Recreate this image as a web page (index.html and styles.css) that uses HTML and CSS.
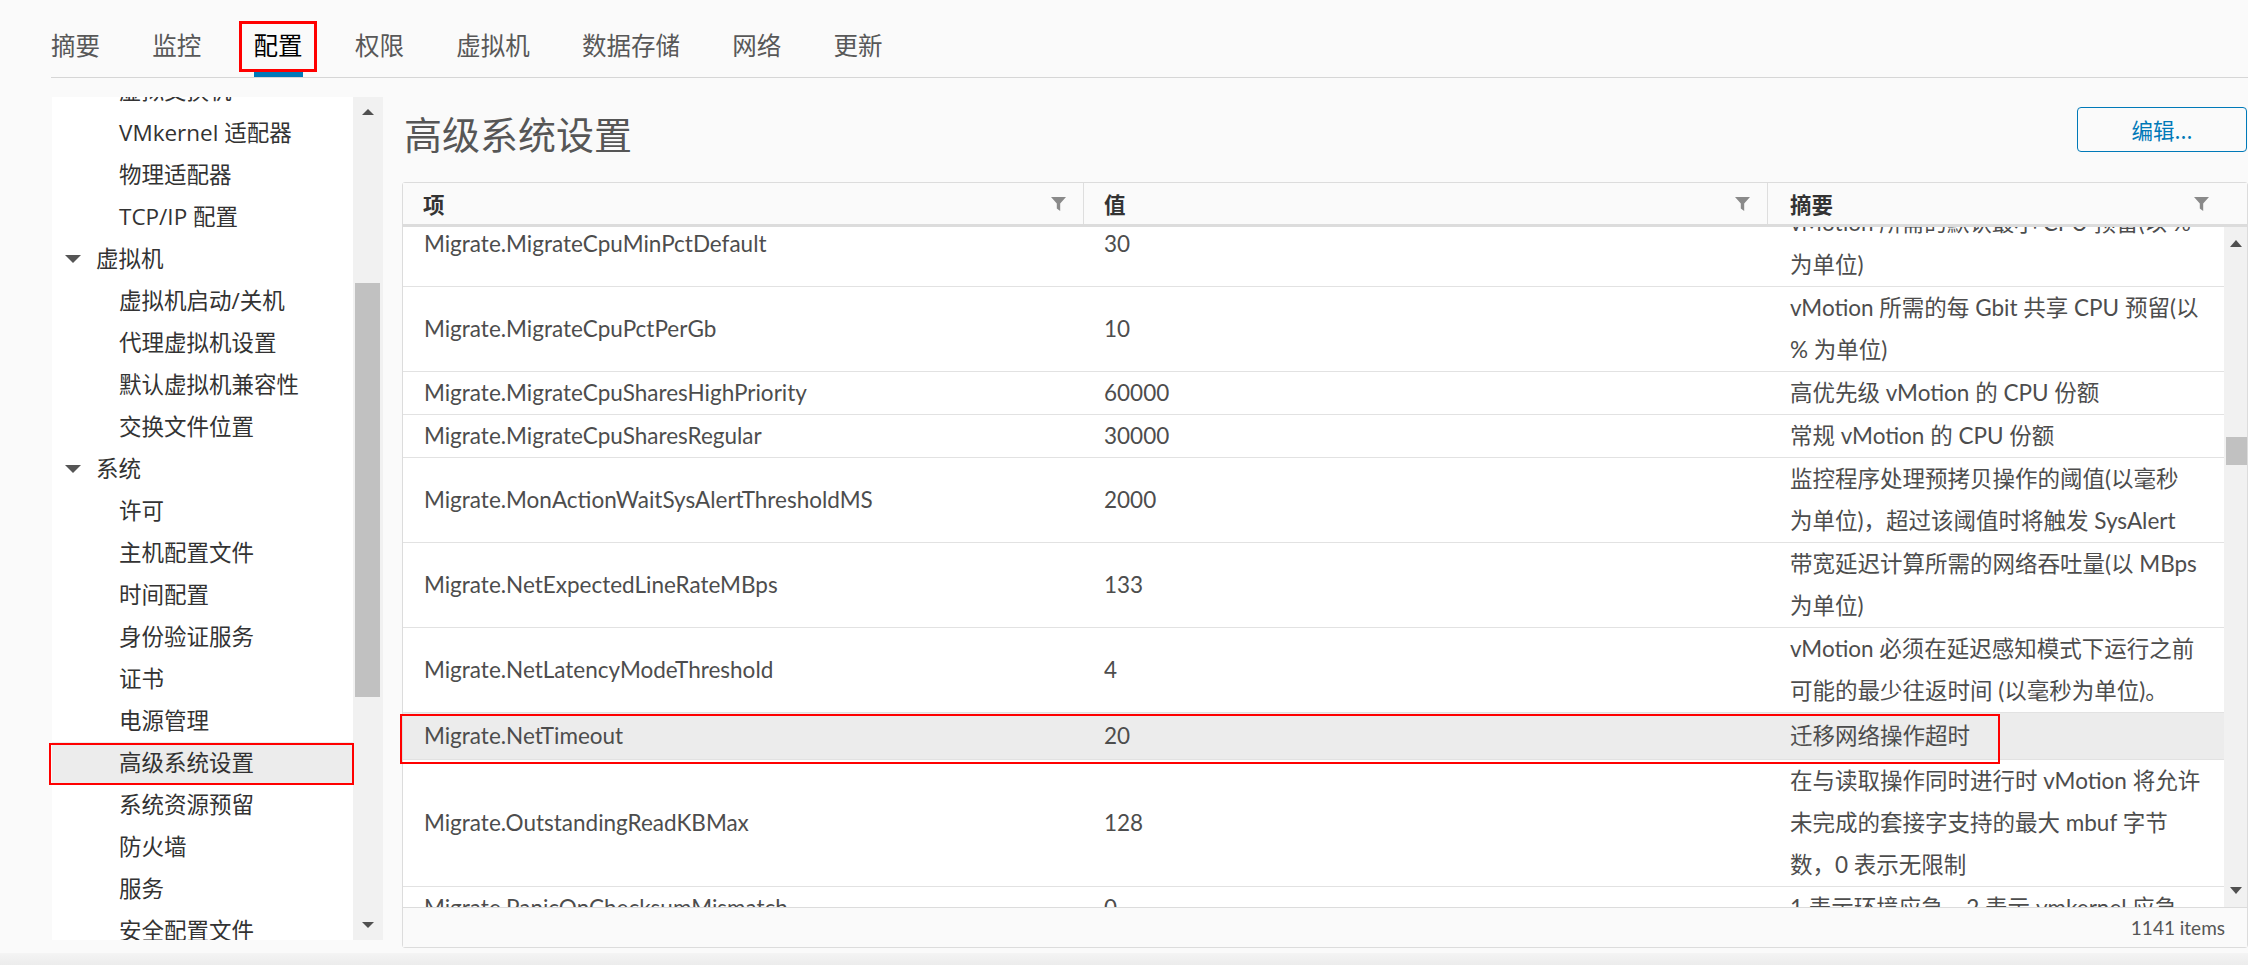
FILE: index.html
```html
<!DOCTYPE html>
<html lang="zh-CN">
<head>
<meta charset="utf-8">
<title>高级系统设置</title>
<link rel="stylesheet" href="styles.css">
</head>
<body>
  <nav class="tabs">
    <div class="tab">摘要</div>
    <div class="tab">监控</div>
    <div class="tab active">配置</div>
    <div class="tab">权限</div>
    <div class="tab">虚拟机</div>
    <div class="tab">数据存储</div>
    <div class="tab">网络</div>
    <div class="tab">更新</div>
  </nav>

  <div class="content">
    <aside class="nav">
      <div class="nav-list">
        <div class="nav-inner">
          <div class="nav-item">虚拟交换机</div>
          <div class="nav-item">VMkernel 适配器</div>
          <div class="nav-item">物理适配器</div>
          <div class="nav-item">TCP/IP 配置</div>
          <div class="nav-item group"><span class="caret"></span><span>虚拟机</span></div>
          <div class="nav-item">虚拟机启动/关机</div>
          <div class="nav-item">代理虚拟机设置</div>
          <div class="nav-item">默认虚拟机兼容性</div>
          <div class="nav-item">交换文件位置</div>
          <div class="nav-item group"><span class="caret"></span><span>系统</span></div>
          <div class="nav-item">许可</div>
          <div class="nav-item">主机配置文件</div>
          <div class="nav-item">时间配置</div>
          <div class="nav-item">身份验证服务</div>
          <div class="nav-item">证书</div>
          <div class="nav-item">电源管理</div>
          <div class="nav-item selected">高级系统设置</div>
          <div class="nav-item">系统资源预留</div>
          <div class="nav-item">防火墙</div>
          <div class="nav-item">服务</div>
          <div class="nav-item">安全配置文件</div>
        </div>
      </div>
      <div class="vscroll">
        <div class="sb-btn"><span class="arrow-up"></span></div>
        <div class="sb-track"><div class="nav-thumb"></div></div>
        <div class="sb-btn"><span class="arrow-down"></span></div>
      </div>
    </aside>

    <main class="main">
      <div class="title-row">
        <h1 class="title">高级系统设置</h1>
        <button class="btn-edit">编辑...</button>
      </div>

      <section class="grid">
        <div class="grid-head">
          <div class="th"><span>项</span><svg class="filter" viewBox="0 0 15 14" width="15" height="14"><path d="M0 0H15L9.2 6.4V14L5.8 11.6V6.4Z"/></svg></div>
          <div class="th"><span>值</span><svg class="filter" viewBox="0 0 15 14" width="15" height="14"><path d="M0 0H15L9.2 6.4V14L5.8 11.6V6.4Z"/></svg></div>
          <div class="th last"><span>摘要</span><svg class="filter" viewBox="0 0 15 14" width="15" height="14"><path d="M0 0H15L9.2 6.4V14L5.8 11.6V6.4Z"/></svg></div>
        </div>
        <div class="grid-body">
          <div class="rows">
            <div class="rows-inner">
              <div class="row"><div class="td">Migrate.MigrateCpuMinPctDefault</div><div class="td">30</div><div class="td sum">vMotion 所需的默认最小 CPU 预留(以 %<br>为单位)</div></div>
              <div class="row"><div class="td">Migrate.MigrateCpuPctPerGb</div><div class="td">10</div><div class="td sum">vMotion 所需的每 Gbit 共享 CPU 预留(以<br>% 为单位)</div></div>
              <div class="row"><div class="td">Migrate.MigrateCpuSharesHighPriority</div><div class="td">60000</div><div class="td sum">高优先级 vMotion 的 CPU 份额</div></div>
              <div class="row"><div class="td">Migrate.MigrateCpuSharesRegular</div><div class="td">30000</div><div class="td sum">常规 vMotion 的 CPU 份额</div></div>
              <div class="row"><div class="td">Migrate.MonActionWaitSysAlertThresholdMS</div><div class="td">2000</div><div class="td sum">监控程序处理预拷贝操作的阈值(以毫秒<br>为单位)，超过该阈值时将触发 SysAlert</div></div>
              <div class="row"><div class="td">Migrate.NetExpectedLineRateMBps</div><div class="td">133</div><div class="td sum">带宽延迟计算所需的网络吞吐量(以 MBps<br>为单位)</div></div>
              <div class="row"><div class="td">Migrate.NetLatencyModeThreshold</div><div class="td">4</div><div class="td sum">vMotion 必须在延迟感知模式下运行之前<br>可能的最少往返时间 (以毫秒为单位)。</div></div>
              <div class="row sel"><div class="td">Migrate.NetTimeout</div><div class="td">20</div><div class="td sum">迁移网络操作超时</div></div>
              <div class="row"><div class="td">Migrate.OutstandingReadKBMax</div><div class="td">128</div><div class="td sum">在与读取操作同时进行时 vMotion 将允许<br>未完成的套接字支持的最大 mbuf 字节<br>数，0 表示无限制</div></div>
              <div class="row"><div class="td">Migrate.PanicOnChecksumMismatch</div><div class="td">0</div><div class="td sum">1 表示环境应急，2 表示 vmkernel 应急</div></div>
            </div>
          </div>
          <div class="tscroll">
            <div class="tsb-btn"><span class="arrow-up small"></span></div>
            <div class="tsb-track"><div class="table-thumb"></div></div>
            <div class="tsb-btn"><span class="arrow-down small"></span></div>
          </div>
        </div>
        <div class="grid-foot">1141 items</div>
      </section>
    </main>
  </div>
  <div class="bottom-strip"></div>

  <div class="annot annot-tab"></div>
  <div class="annot annot-nav"></div>
  <div class="annot annot-row"></div>
</body>
</html>
```

FILE: styles.css
```css
html, body {
  margin: 0;
  padding: 0;
}

body {
  position: relative;
  height: 965px;
  overflow: hidden;
  background: #fafafa;
  font-family: Lato, "Noto Sans CJK SC", sans-serif;
  color: #565656;
  display: flex;
  flex-direction: column;
}

/* ---------- top tabs ---------- */
.tabs {
  display: flex;
  gap: 52.3px;
  margin-left: 51px;
  height: 77px;
  flex: 0 0 auto;
  border-bottom: 1px solid #d6d6d6;
}

.tab {
  position: relative;
  font-family: "Noto Sans CJK SC", sans-serif;
  font-size: 24.5px;
  line-height: 34px;
  padding-top: 28px;
  color: #585858;
  white-space: nowrap;
}

.tab.active {
  color: #000;
}

.tab.active::after {
  content: "";
  position: absolute;
  left: 0;
  right: 0;
  bottom: 0;
  height: 5px;
  background: #0079b8;
}

/* ---------- content ---------- */
.content {
  display: flex;
  flex: 1 1 auto;
  min-height: 0;
}

.nav {
  display: flex;
  flex: 0 0 auto;
  width: 331px;
  height: 843px;
  margin: 19px 0 0 52px;
  background: #fff;
}

.nav-list {
  width: 301px;
  overflow: hidden;
}

.nav-inner {
  margin-top: -27px;
}

.nav-item {
  height: 42px;
  line-height: 42px;
  padding-left: 67px;
  font-family: "Open Sans", "Noto Sans CJK SC", sans-serif;
  font-size: 22.5px;
  color: #333;
  white-space: nowrap;
}

.nav-item.group {
  display: flex;
  align-items: center;
  gap: 15px;
  padding-left: 13px;
}

.nav-item.selected {
  background: #ececec;
}

.caret {
  width: 0;
  height: 0;
  border-left: 8px solid transparent;
  border-right: 8px solid transparent;
  border-top: 8px solid #555;
}

.vscroll {
  width: 30px;
  background: #f1f1f1;
  display: flex;
  flex-direction: column;
}

.sb-btn {
  height: 30px;
  display: flex;
  align-items: center;
  justify-content: center;
}

.sb-track {
  flex: 1;
}

.nav-thumb {
  margin: 156px 3px 0 2px;
  height: 414px;
  background: #c1c1c1;
}

.arrow-up {
  width: 0;
  height: 0;
  border-left: 6px solid transparent;
  border-right: 6px solid transparent;
  border-bottom: 6px solid #505050;
}

.arrow-down {
  width: 0;
  height: 0;
  border-left: 6px solid transparent;
  border-right: 6px solid transparent;
  border-top: 6px solid #505050;
}

.arrow-up.small {
  border-bottom-width: 7px;
}

.arrow-down.small {
  border-top-width: 7px;
}

/* ---------- main ---------- */
.main {
  flex: 1 1 auto;
  min-width: 0;
  padding-left: 19px;
  display: flex;
  flex-direction: column;
}

.title-row {
  display: flex;
  justify-content: space-between;
  align-items: flex-start;
  margin-top: 29px;
  padding-left: 2px;
}

.title {
  margin: 0;
  font-family: "Noto Sans CJK SC", sans-serif;
  font-size: 38px;
  font-weight: normal;
  line-height: 51px;
  color: #565656;
}

.btn-edit {
  box-sizing: border-box;
  width: 170px;
  height: 45px;
  margin-right: 1px;
  border: 1px solid #0079b8;
  border-radius: 4px;
  background: transparent;
  color: #0079b8;
  font-family: "Noto Sans CJK SC", sans-serif;
  font-size: 21.5px;
  padding: 0;
}

/* ---------- data grid ---------- */
.grid {
  margin-top: 24px;
  border: 1px solid #dcdcdc;
  border-radius: 3px;
  background: #fff;
  display: flex;
  flex-direction: column;
}

.grid-head {
  display: grid;
  grid-template-columns: 680px 684px 1fr;
  height: 41px;
  background: #fafafa;
  border-bottom: 3px solid #dcdcdc;
}

.th {
  display: flex;
  align-items: center;
  justify-content: space-between;
  padding: 0 17px 0 20px;
  font-size: 21.5px;
  font-weight: bold;
  color: #333;
}

.th + .th {
  border-left: 1px solid #dedede;
}

.th.last {
  padding-left: 22px;
  padding-right: 38px;
}

.filter {
  fill: #8a8a8a;
  flex: 0 0 auto;
}

.grid-body {
  display: flex;
  height: 680px;
}

.rows {
  flex: 1;
  overflow: hidden;
}

.rows-inner {
  margin-top: -25px;
}

.row {
  display: grid;
  grid-template-columns: 680px 684px 1fr;
  align-items: center;
  border-bottom: 1px solid #e2e2e2;
  font-size: 22.5px;
  line-height: 42px;
  color: #4d4d4d;
  white-space: nowrap;
}

.row.sel {
  background: #ececec;
  padding: 2px 0;
}

.td {
  padding-left: 21px;
  overflow: hidden;
}

.td.sum {
  padding-left: 23px;
}

.tscroll {
  width: 23px;
  background: #f1f1f1;
  display: flex;
  flex-direction: column;
}

.tsb-btn {
  height: 33px;
  display: flex;
  align-items: center;
  justify-content: center;
}

.tsb-track {
  flex: 1;
}

.table-thumb {
  margin: 177px 0 0 2px;
  height: 28px;
  background: #c1c1c1;
}

.grid-foot {
  height: 39px;
  border-top: 1px solid #dcdcdc;
  background: #fafafa;
  display: flex;
  align-items: center;
  justify-content: flex-end;
  padding-right: 22px;
  font-size: 19px;
  color: #565656;
}

.bottom-strip {
  flex: 0 0 12px;
  background: linear-gradient(#f4f4f4, #ececec);
}

/* ---------- red annotation boxes ---------- */
.annot {
  position: absolute;
  box-sizing: border-box;
  border: 2px solid #f00;
  pointer-events: none;
}

.annot-tab {
  left: 239px;
  top: 21px;
  width: 78px;
  height: 51px;
  border-width: 3px;
}

.annot-nav {
  left: 49px;
  top: 743px;
  width: 305px;
  height: 42px;
}

.annot-row {
  left: 400px;
  top: 714px;
  width: 1600px;
  height: 50px;
}
```
